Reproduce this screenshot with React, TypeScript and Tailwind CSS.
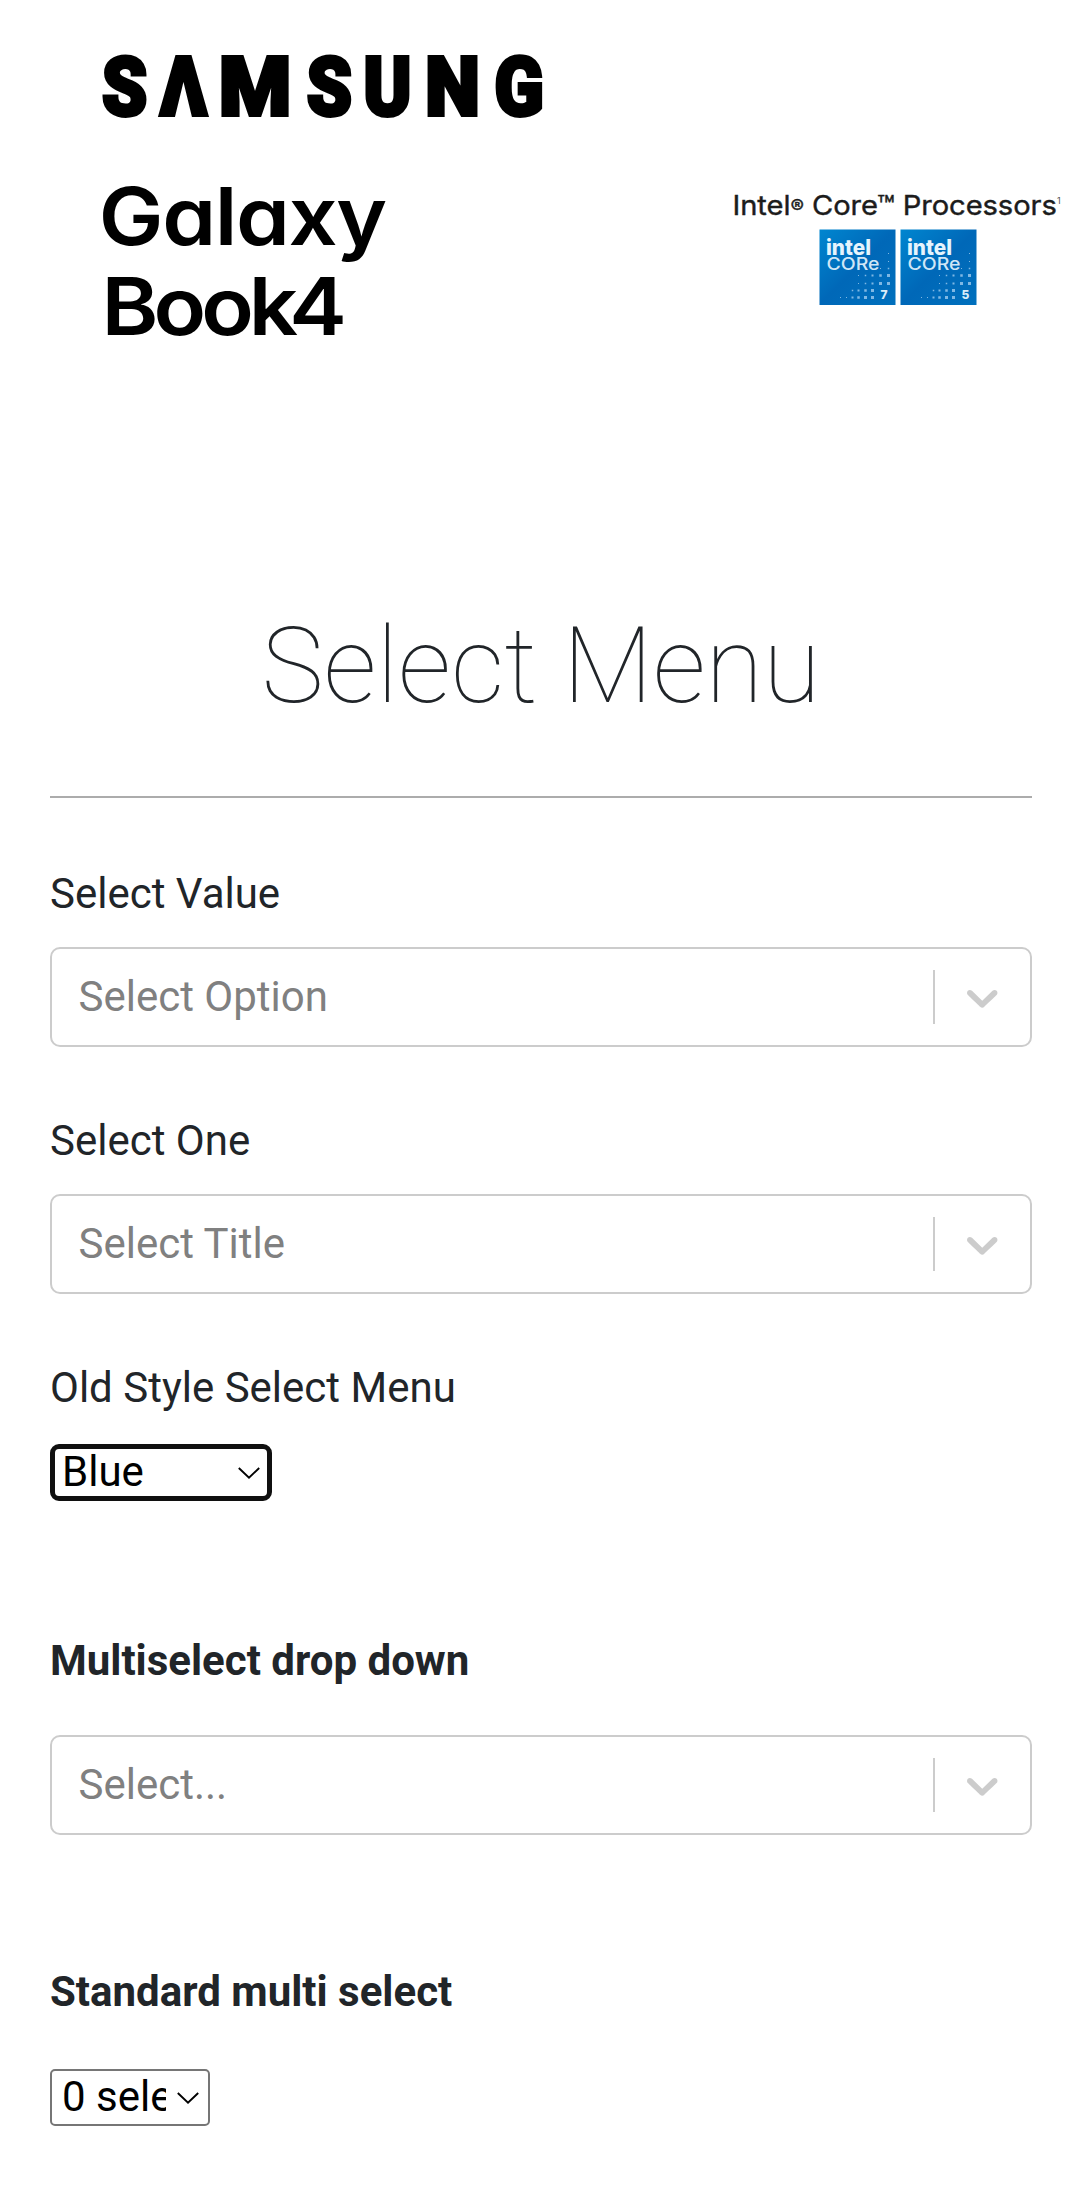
import type { ReactNode } from "react";

function Chevron() {
  return (
    <svg viewBox="0 0 20 20" className="size-[52.5px] fill-[#cccccc]" aria-hidden="true">
      <path d="M4.516 7.548c0.436-0.446 1.043-0.481 1.576 0l3.908 3.747 3.908-3.747c0.533-0.481 1.141-0.446 1.574 0 0.436 0.445 0.408 1.197 0 1.615-0.406 0.418-4.695 4.502-4.695 4.502-0.217 0.223-0.502 0.335-0.787 0.335s-0.57-0.112-0.789-0.335c0 0-4.287-4.084-4.695-4.502s-0.436-1.17 0-1.615z" />
    </svg>
  );
}

function ComboBox({ placeholder }: { placeholder: string }) {
  return (
    <div className="flex h-[100px] w-full items-center rounded-[10px] border-2 border-[#cccccc] bg-white">
      <span className="flex-1 pb-0.5 pl-[26.5px] leading-[63px] text-[#808080]">{placeholder}</span>
      <span className="h-[54px] w-[2px] bg-[#cccccc]" />
      <span className="pr-[22px] pl-[21px]">
        <Chevron />
      </span>
    </div>
  );
}

function Arrow() {
  return (
    <svg viewBox="0 0 22 12" className="h-3 w-[22px] shrink-0" aria-hidden="true">
      <path d="M0.8 1 L11 10.7 L21.2 1" fill="none" stroke="#000" strokeWidth="1.9" />
    </svg>
  );
}

function Label({ children }: { children: ReactNode }) {
  return <div className="h-[63px] leading-[63px]">{children}</div>;
}

function CoreBadge({ x, n }: { x: number; n: string }) {
  const dots: number[][] = [
    [68, 24, 1], [68, 32, 1], [60, 39, 1], [68, 39, 1.5],
    [38, 46, 1], [45, 46, 1.5], [52, 46, 2], [60, 46, 2.5], [68, 46, 3],
    [38, 54, 1], [45, 54, 1.5], [52, 54, 2], [60, 54, 3], [68, 54, 3],
    [32, 61, 1.5], [38, 61, 2], [45, 61, 2.5], [52, 61, 3],
    [20, 68, 1], [26, 68, 1], [32, 68, 2], [38, 68, 2.5], [45, 68, 3], [52, 68, 3],
  ];
  return (
    <g transform={`translate(${x} 229.5)`}>
      <rect width="76" height="75.5" fill="url(#badge)" />
      {dots.map(([cx, cy, s], i) => (
        <rect key={i} x={cx - s / 2 + 1} y={cy - s / 2} width={s} height={s} fill="#7fb8e4" />
      ))}
      <text x="6.5" y="25.5" fontSize="21.5" fontWeight="800" fill="#e6f4fd" textLength="45" lengthAdjust="spacingAndGlyphs">intel</text>
      <text x="7" y="40.5" fontSize="17" fontWeight="500" fill="#cfe6f7" textLength="53" lengthAdjust="spacingAndGlyphs">CORe</text>
      <text x="61" y="69.5" fontSize="12" fontWeight="800" fill="#d8ecf9">{n}</text>
    </g>
  );
}

function Banner() {
  return (
    <svg viewBox="0 0 1080 460" className="block h-[460px] w-[1080px]" fontFamily="Inter, sans-serif" role="img" aria-label="Samsung Galaxy Book4">
      <defs>
        <linearGradient id="badge" x1="0" y1="0" x2="1" y2="1">
          <stop offset="0" stopColor="#0086d0" />
          <stop offset="0.5" stopColor="#0068b8" />
          <stop offset="1" stopColor="#0070bd" />
        </linearGradient>
      </defs>
      <g transform="scale(0.88 1)" fontFamily="Roboto, sans-serif" fontSize="82" fontWeight="900" stroke="#000" strokeWidth="4">
        <text y="115">
          <tspan x="115.8 182">SΛ</tspan>
          <tspan x="249" textLength="82" lengthAdjust="spacingAndGlyphs">M</tspan>
          <tspan x="348.5 413">SU</tspan>
          <tspan x="483.2" textLength="62" lengthAdjust="spacingAndGlyphs">N</tspan>
          <tspan x="562">G</tspan>
        </text>
      </g>
      <g transform="scale(1.08 1)" fontSize="80" fontWeight="600">
        <text x="91.5" y="245" className="[font-feature-settings:'cv11']" textLength="267">Galaxy</text>
        <text x="94" y="335.5" textLength="227">Book4</text>
      </g>
      <text transform="scale(1.06 1)" x="691" y="215" fontSize="27.5" fontWeight="400" fill="#1c1c1c" stroke="#1c1c1c" strokeWidth="0.4" textLength="306">
        Intel<tspan dy="-2" fontSize="19">®</tspan><tspan dy="2"> Core™ Processors</tspan>
      </text>
      <text x="1057" y="204" fontSize="9" fill="#555">1</text>
      <CoreBadge x={819.5} n="7" />
      <CoreBadge x={900.5} n="5" />
    </svg>
  );
}

export default function App() {
  return (
    <div className="h-[2201px] w-[1080px] overflow-hidden bg-white font-['Roboto',sans-serif] text-[42px] text-[#212529]">
      <Banner />
      <main className="flex flex-col pr-12 pl-[50px]">
        <h1 className="mt-36 text-center text-[105px] leading-[126px] font-thin">Select Menu</h1>
        <hr className="mt-[66px] border-t-2 border-[#acacac]" />
        <section className="mt-16 flex flex-col gap-[22px]">
          <Label>Select Value</Label>
          <ComboBox placeholder="Select Option" />
        </section>
        <section className="mt-[62px] flex flex-col gap-[22px]">
          <Label>Select One</Label>
          <ComboBox placeholder="Select Title" />
        </section>
        <section className="mt-[62px] flex flex-col gap-[25px]">
          <Label>Old Style Select Menu</Label>
          <div className="flex h-[57px] w-[222px] items-center justify-between rounded-[9px] border-[5px] border-[#101010] pr-[7px] pl-[7px] leading-[49px] text-black">
            <span className="pb-0.5">Blue</span>
            <Arrow />
          </div>
        </section>
        <section className="mt-32 flex flex-col gap-[43px]">
          <div className="font-bold">
            <Label>Multiselect drop down</Label>
          </div>
          <ComboBox placeholder="Select..." />
        </section>
        <section className="mt-[125px] flex flex-col gap-[46px]">
          <div className="font-bold">
            <Label>Standard multi select</Label>
          </div>
          <div className="flex h-[57px] w-[160px] items-center rounded-[5px] border-2 border-[#767676] pr-[9px] pl-[10px] leading-[49px] text-black">
            <span className="w-[104px] overflow-hidden pb-0.5 whitespace-nowrap">0 selected</span>
            <span className="ml-auto flex">
              <Arrow />
            </span>
          </div>
        </section>
      </main>
    </div>
  );
}
